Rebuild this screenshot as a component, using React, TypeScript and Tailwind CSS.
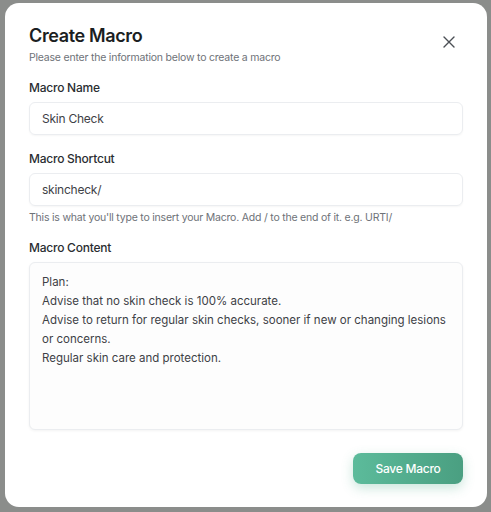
import React from "react";

export default function App() {
  return (
    <div
      className="w-[491px] h-[512px] bg-[#8b8d8b] pt-[3px] pl-[5px] pr-[4px] pb-[5px] overflow-hidden"
      style={{ fontFamily: "Inter, 'Noto Sans', sans-serif" }}
    >
      <div className="h-full bg-white rounded-[14px] px-6 pt-[21px] flex flex-col">
        <div className="flex items-start justify-between">
          <div>
            <h1 className="text-[18px] leading-[24px] font-semibold tracking-[-0.02em] text-[#1b1e22]">Create Macro</h1>
            <p className="mt-[2px] text-[10.5px] leading-[16px] tracking-[-0.02em] text-[#6e7278]">
              Please enter the information below to create a macro
            </p>
          </div>
          <button className="mt-[12px] mr-[8px] text-[#4b4f55]">
            <svg width="12" height="12" viewBox="0 0 12 12" fill="none" stroke="currentColor" strokeWidth="1.4" strokeLinecap="round">
              <path d="M1 1 L11 11 M11 1 L1 11" />
            </svg>
          </button>
        </div>

        <div className="mt-[14px] flex flex-col">
          <label className="text-[12px] leading-[16px] font-medium tracking-[-0.02em] text-[#2a2d31]">Macro Name</label>
          <div className="mt-[6px] h-[33px] rounded-[6px] border border-[#ebedf0] shadow-[0_1px_2px_rgba(0,0,0,0.04)] px-3 flex items-center text-[12px] tracking-[-0.02em] text-[#3e4146]">
            Skin Check
          </div>
        </div>

        <div className="mt-[16px] flex flex-col">
          <label className="text-[12px] leading-[16px] font-medium tracking-[-0.02em] text-[#2a2d31]">Macro Shortcut</label>
          <div className="mt-[6px] h-[33px] rounded-[6px] border border-[#ebedf0] shadow-[0_1px_2px_rgba(0,0,0,0.04)] px-3 flex items-center text-[12px] tracking-[-0.02em] text-[#3e4146]">
            skincheck/
          </div>
          <p className="mt-[4px] text-[10.5px] leading-[16px] tracking-[-0.02em] text-[#6e7278]">
            This is what you'll type to insert your Macro. Add / to the end of it. e.g. URTI/
          </p>
        </div>

        <div className="mt-[14px] flex flex-col">
          <label className="text-[12px] leading-[16px] font-medium tracking-[-0.02em] text-[#2a2d31]">Macro Content</label>
          <div className="mt-[6px] h-[168px] rounded-[6px] border border-[#ebedf0] bg-[#fdfdfd] shadow-[0_1px_3px_rgba(0,0,0,0.05)] px-3 pt-[10px] text-[11.5px] leading-[19px] text-[#3e4146] whitespace-nowrap">
            <div>Plan:</div>
            <div>Advise that no skin check is 100% accurate.</div>
            <div>Advise to return for regular skin checks, sooner if new or changing lesions</div>
            <div>or concerns.</div>
            <div>Regular skin care and protection.</div>
          </div>
        </div>

        <div className="mt-[23px] flex justify-end">
          <button className="w-[110px] h-[31px] rounded-[8px] bg-gradient-to-r from-[#5cbb9b] to-[#4a9f81] text-white text-[12px] font-medium tracking-[-0.02em] shadow-[0_4px_12px_rgba(76,170,135,0.3)]">
            Save Macro
          </button>
        </div>
      </div>
    </div>
  );
}
